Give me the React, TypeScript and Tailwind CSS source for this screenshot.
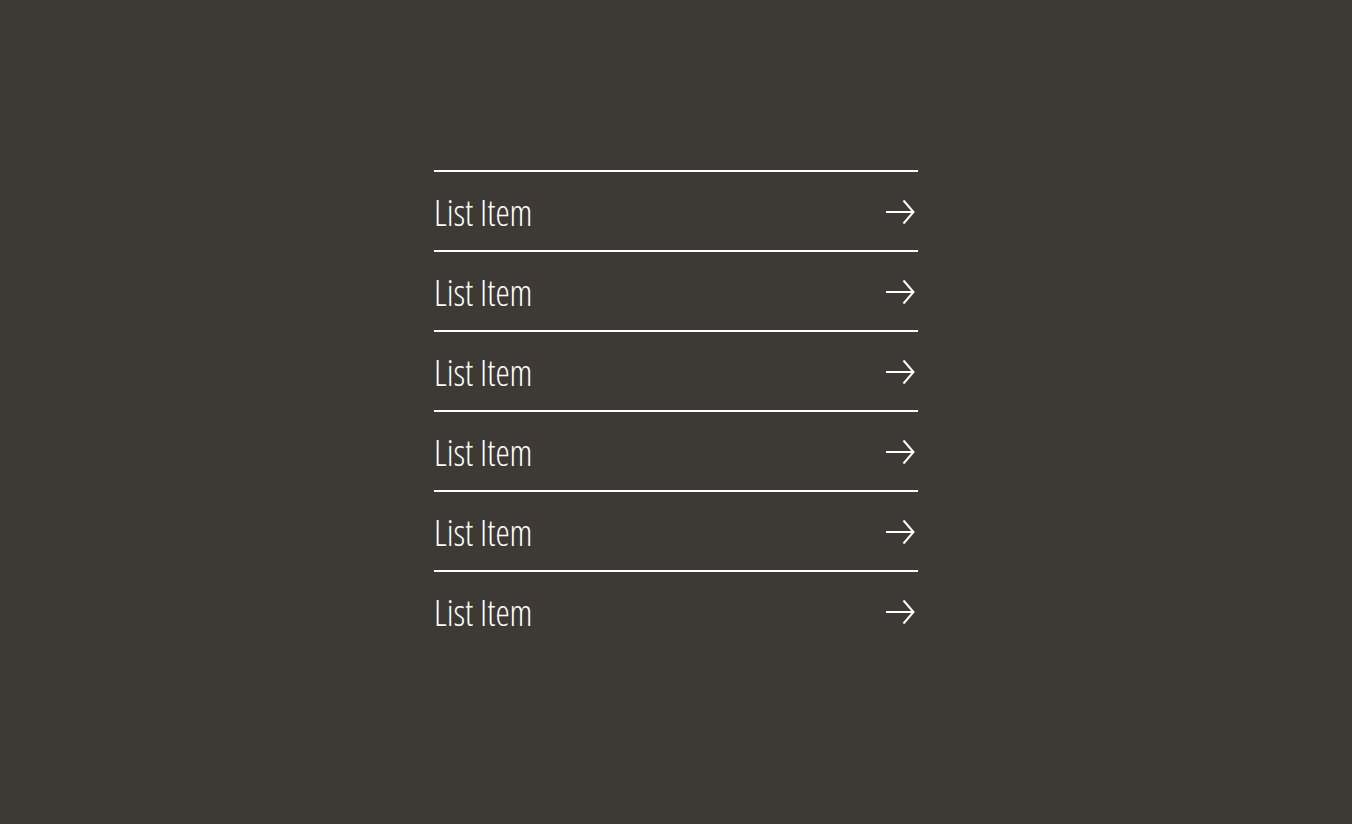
const items = ['List Item', 'List Item', 'List Item', 'List Item', 'List Item', 'List Item']

function ArrowRight() {
  return (
    <svg width="30" height="26" viewBox="0 0 30 26" fill="none" stroke="currentColor" strokeWidth="2" className="mt-[2px]">
      <path d="M1 13H28.5" />
      <path d="M18.5 1.5L28.5 13L18.5 24.5" />
    </svg>
  )
}

export default function App() {
  return (
    <div className="min-h-screen bg-[#3d3935] pt-[170px] text-white">
      <ul className="mx-auto w-[484px]">
        {items.map((label, i) => (
          <li key={i} className="flex h-[80px] items-center justify-between border-t-2 border-white pr-[3px]">
            <span
              className="pt-[3px] text-[36px] font-light leading-none"
              style={{ fontFamily: "'Open Sans', sans-serif", fontStretch: 'condensed' }}
            >
              {label}
            </span>
            <ArrowRight />
          </li>
        ))}
      </ul>
    </div>
  )
}
